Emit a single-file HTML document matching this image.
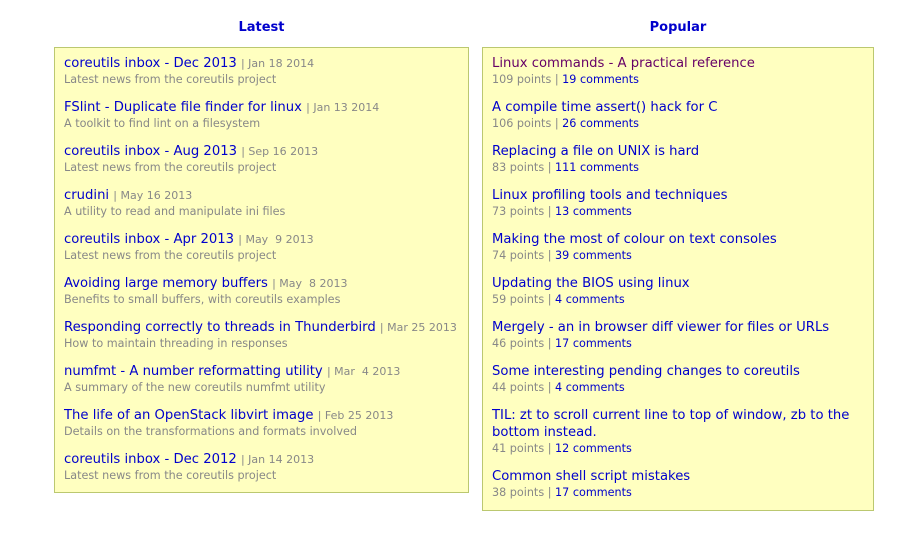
<!DOCTYPE html>
<html><head><meta charset="utf-8"><style>
body{margin:0;background:#fff;font-family:Verdana,"DejaVu Sans",sans-serif;width:919px;height:560px;position:relative;overflow:hidden}
h2{position:absolute;top:19px;margin:0;font-size:13px;font-weight:bold;color:#0000cc;line-height:18px;text-align:center}
.box{position:absolute;top:47px;background:#ffffc0;border:1px solid #bbc870;padding:7px 9px 8px 9px;box-sizing:border-box}
.it{margin-bottom:11px}
.it:last-child{margin-bottom:0}
.t{font-size:13.2px;line-height:17px;color:#0000cc;white-space:nowrap}
.t.w{white-space:normal}
.v{color:#660066}
.d{font-size:11px;color:#888}
.m{font-size:11.2px;line-height:16px;color:#888;white-space:nowrap}
.c{color:#0000cc}
</style></head><body>
<h2 style="left:54px;width:415px">Latest</h2>
<h2 style="left:482px;width:392px">Popular</h2>
<div class="box" style="left:54px;width:415px;height:446px">
<div class="it"><div class="t">coreutils inbox - Dec 2013 <span class="d">| Jan 18 2014</span></div><div class="m">Latest news from the coreutils project</div></div>
<div class="it"><div class="t">FSlint - Duplicate file finder for linux <span class="d">| Jan 13 2014</span></div><div class="m">A toolkit to find lint on a filesystem</div></div>
<div class="it"><div class="t">coreutils inbox - Aug 2013 <span class="d">| Sep 16 2013</span></div><div class="m">Latest news from the coreutils project</div></div>
<div class="it"><div class="t">crudini <span class="d">| May 16 2013</span></div><div class="m">A utility to read and manipulate ini files</div></div>
<div class="it"><div class="t">coreutils inbox - Apr 2013 <span class="d">| May&nbsp; 9 2013</span></div><div class="m">Latest news from the coreutils project</div></div>
<div class="it"><div class="t">Avoiding large memory buffers <span class="d">| May&nbsp; 8 2013</span></div><div class="m">Benefits to small buffers, with coreutils examples</div></div>
<div class="it"><div class="t">Responding correctly to threads in Thunderbird <span class="d">| Mar 25 2013</span></div><div class="m">How to maintain threading in responses</div></div>
<div class="it"><div class="t">numfmt - A number reformatting utility <span class="d">| Mar&nbsp; 4 2013</span></div><div class="m">A summary of the new coreutils numfmt utility</div></div>
<div class="it"><div class="t">The life of an OpenStack libvirt image <span class="d">| Feb 25 2013</span></div><div class="m">Details on the transformations and formats involved</div></div>
<div class="it"><div class="t">coreutils inbox - Dec 2012 <span class="d">| Jan 14 2013</span></div><div class="m">Latest news from the coreutils project</div></div>
</div>
<div class="box" style="left:482px;width:392px;height:464px">
<div class="it"><div class="t v">Linux commands - A practical reference</div><div class="m">109 points | <span class="c">19 comments</span></div></div>
<div class="it"><div class="t">A compile time assert() hack for C</div><div class="m">106 points | <span class="c">26 comments</span></div></div>
<div class="it"><div class="t">Replacing a file on UNIX is hard</div><div class="m">83 points | <span class="c">111 comments</span></div></div>
<div class="it"><div class="t">Linux profiling tools and techniques</div><div class="m">73 points | <span class="c">13 comments</span></div></div>
<div class="it"><div class="t">Making the most of colour on text consoles</div><div class="m">74 points | <span class="c">39 comments</span></div></div>
<div class="it"><div class="t">Updating the BIOS using linux</div><div class="m">59 points | <span class="c">4 comments</span></div></div>
<div class="it"><div class="t">Mergely - an in browser diff viewer for files or URLs</div><div class="m">46 points | <span class="c">17 comments</span></div></div>
<div class="it"><div class="t">Some interesting pending changes to coreutils</div><div class="m">44 points | <span class="c">4 comments</span></div></div>
<div class="it"><div class="t w">TIL: zt to scroll current line to top of window, zb to the bottom instead.</div><div class="m">41 points | <span class="c">12 comments</span></div></div>
<div class="it"><div class="t">Common shell script mistakes</div><div class="m">38 points | <span class="c">17 comments</span></div></div>
</div>
</body></html>
